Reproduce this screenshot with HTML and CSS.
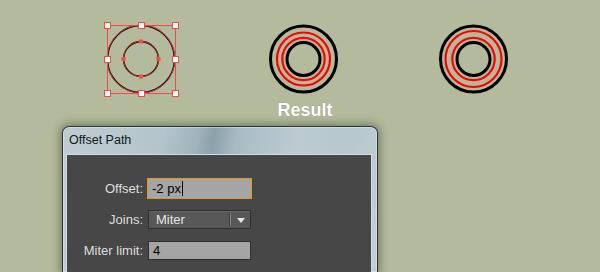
FILE: index.html
```html
<!DOCTYPE html>
<html lang="en">
  <head>
    <meta charset="UTF-8" />
    <meta name="viewport" content="width=device-width, initial-scale=1.0" />
    <link rel="stylesheet" href="styles.css">
    <title>Offset Path</title>
  </head>
  <body>
    <div class="artwork">
      <svg class="art-canvas" width="600" height="126" viewBox="0 0 600 126">
        <!-- original path, selected -->
        <g fill="none">
          <circle cx="141" cy="59" r="33.6" stroke="#000" stroke-width="1.6"/>
          <circle cx="141" cy="59" r="17.4" stroke="#000" stroke-width="1.6"/>
          <circle cx="141" cy="59" r="34" stroke="#f24a4a" stroke-width="0.8"/>
          <circle cx="141" cy="59" r="17.6" stroke="#f24a4a" stroke-width="0.8"/>
          <rect x="107.5" y="25.5" width="68" height="68" stroke="#f24a4a" stroke-width="1"/>
        </g>
        <g fill="#f24a4a">
          <rect x="139" y="39.5" width="4" height="4"/>
          <rect x="139" y="74.5" width="4" height="4"/>
          <rect x="121.5" y="57" width="4" height="4"/>
          <rect x="156.5" y="57" width="4" height="4"/>
        </g>
        <g fill="#fff" stroke="#f24a4a" stroke-width="1">
          <rect x="104.5" y="22.5" width="6" height="6"/>
          <rect x="138.5" y="22.5" width="6" height="6"/>
          <rect x="172.5" y="22.5" width="6" height="6"/>
          <rect x="104.5" y="56.5" width="6" height="6"/>
          <rect x="172.5" y="56.5" width="6" height="6"/>
          <rect x="104.5" y="90.5" width="6" height="6"/>
          <rect x="138.5" y="90.5" width="6" height="6"/>
          <rect x="172.5" y="90.5" width="6" height="6"/>
        </g>

        <!-- result -->
        <g fill="none">
          <circle cx="303.5" cy="59" r="33" stroke="#000" stroke-width="3"/>
          <circle cx="303.5" cy="59" r="26.5" stroke="#f00" stroke-width="2.2"/>
          <circle cx="303.5" cy="59" r="21.2" stroke="#f00" stroke-width="2.2"/>
          <circle cx="303.5" cy="59" r="16.5" stroke="#000" stroke-width="3"/>
        </g>
        <text class="result-label" x="305" y="116" text-anchor="middle">Result</text>

        <!-- expected -->
        <g fill="none">
          <circle cx="473.5" cy="59" r="33" stroke="#000" stroke-width="3"/>
          <circle cx="473.5" cy="59" r="28" stroke="#f00" stroke-width="2.2"/>
          <circle cx="473.5" cy="59" r="21.2" stroke="#f00" stroke-width="2.2"/>
          <circle cx="473.5" cy="59" r="16.5" stroke="#000" stroke-width="3"/>
        </g>
      </svg>
    </div>

    <div class="dialog">
      <div class="dialog-title">Offset Path</div>
      <div class="dialog-panel">
        <div class="form">
          <label class="form-label">Offset:</label>
          <div class="field field-focus"><span class="caret">-2 px</span></div>

          <label class="form-label">Joins:</label>
          <div class="select">
            <span class="select-value">Miter</span>
            <span class="select-sep"></span>
            <span class="select-arrow"></span>
          </div>

          <label class="form-label">Miter limit:</label>
          <div class="field">4</div>
        </div>
      </div>
    </div>
  </body>
</html>
```

FILE: styles.css
```css
body {
    margin: 0;
    width: 600px;
    height: 272px;
    overflow: hidden;
    background: #b3bb9c;
    font-family: "Liberation Sans", Arial, sans-serif;
}

.artwork {
    height: 126px;
}

.art-canvas {
    display: block;
}

.result-label {
    font-family: "Liberation Sans", Arial, sans-serif;
    font-weight: bold;
    font-size: 18px;
    fill: #fff;
    stroke: rgba(70, 80, 60, 0.4);
    stroke-width: 0.7px;
    paint-order: stroke;
}

.dialog {
    margin-left: 62px;
    width: 316px;
    height: 146px;
    box-sizing: border-box;
    padding: 0 5px 0 3px;
    border: 1px solid #2c3438;
    border-bottom: 0;
    border-radius: 7px 7px 0 0;
    background: linear-gradient(100deg, #bfcdd3 0%, #b3c4cb 30%, #9fb4bc 40%, #8aa2ab 45%, #a9bcc4 52%, #bccbd2 70%, #b6c7ce 85%, #c1cfd5 100%);
    box-shadow: 0 0 9px 2px rgba(40, 45, 30, 0.45), inset 0 0 0 1px rgba(255, 255, 255, 0.35);
}

.dialog-title {
    height: 27px;
    line-height: 27px;
    padding-left: 3px;
    font-size: 12.5px;
    color: #101820;
}

.dialog-panel {
    height: 118px;
    box-sizing: border-box;
    background: #474747;
    border: 1px solid #d3dee2;
    border-bottom: 0;
}

.form {
    display: grid;
    grid-template-columns: 76px 105px;
    grid-auto-rows: 21px;
    column-gap: 4px;
    row-gap: 10px;
    align-items: center;
    padding-top: 23px;
}

.form-label {
    text-align: right;
    font-size: 13px;
    color: #dedede;
}

.field {
    box-sizing: border-box;
    height: 19px;
    width: 103px;
    margin-left: 1px;
    padding-left: 4px;
    line-height: 17px;
    font-size: 13px;
    color: #000;
    background: #a5a5a5;
    border: 1px solid #2f2f2f;
}

.field-focus {
    height: 21px;
    width: 105px;
    margin-left: 0;
    line-height: 19px;
    border-color: #f0901c;
}

.caret {
    border-right: 1px solid #000;
    padding-right: 1px;
}

.select {
    box-sizing: border-box;
    display: flex;
    align-items: center;
    height: 19px;
    width: 103px;
    margin-left: 1px;
    background: #585858;
    border: 1px solid #303030;
    box-shadow: inset 0 1px 0 #646464;
}

.select-value {
    flex: 1;
    padding-left: 7px;
    font-size: 13px;
    color: #e6e6e6;
}

.select-sep {
    width: 1px;
    height: 13px;
    background: #8a8a8a;
    border-left: 1px solid #3a3a3a;
}

.select-arrow {
    width: 0;
    height: 0;
    margin: 1px 5px 0 6px;
    border-left: 4px solid transparent;
    border-right: 4px solid transparent;
    border-top: 5px solid #e6e6e6;
}
```
